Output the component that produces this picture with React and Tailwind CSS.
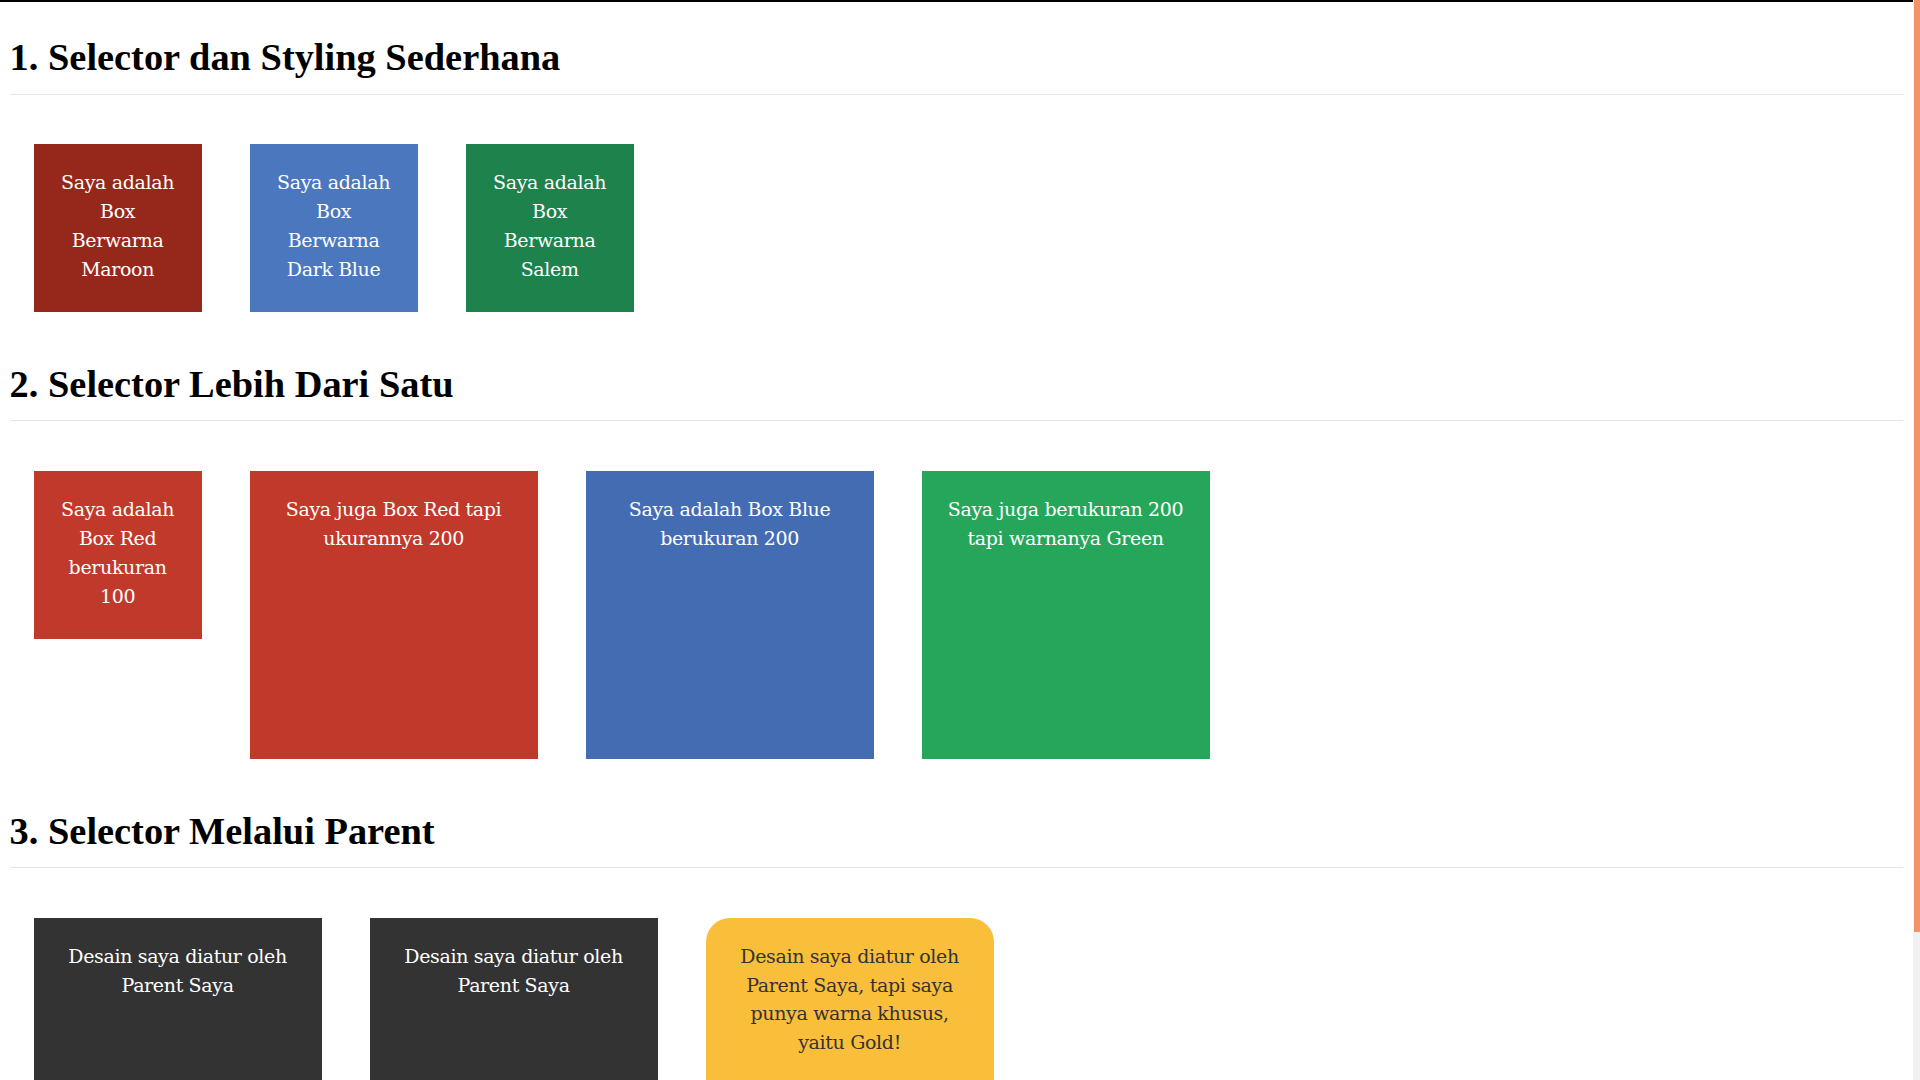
import React from "react";

const boxText =
  "p-[24px] text-center text-[19px] leading-[28.8px] tracking-[-0.35px] font-['DejaVu_Serif',serif] shrink-0";

function Heading({ children }) {
  return (
    <h1 className="mt-[25.7px] pb-[14.4px] border-b border-[#e6e6e6] text-[38.4px] leading-[44px] font-bold text-black font-['Liberation_Serif',serif]">
      {children}
    </h1>
  );
}

function Row({ children }) {
  return <div className="mt-[25.7px] p-[24px] flex items-start gap-[48px]">{children}</div>;
}

export default function App() {
  return (
    <div className="flex h-[1080px] w-[1920px] overflow-hidden bg-white">
      <div className="flex-1 min-w-0 border-t-2 border-black px-[9.6px] pt-[7.6px]">
        <Heading>1. Selector dan Styling Sederhana</Heading>
        <Row>
          <div className={`w-[168px] h-[168px] bg-[#96281b] text-white ${boxText}`}>
            Saya adalah Box Berwarna Maroon
          </div>
          <div className={`w-[168px] h-[168px] bg-[#4b77be] text-white ${boxText}`}>
            Saya adalah Box Berwarna Dark Blue
          </div>
          <div className={`w-[168px] h-[168px] bg-[#1e824c] text-white ${boxText}`}>
            Saya adalah Box Berwarna Salem
          </div>
        </Row>

        <Heading>2. Selector Lebih Dari Satu</Heading>
        <Row>
          <div className={`w-[168px] h-[168px] bg-[#c0392b] text-white ${boxText}`}>
            Saya adalah Box Red berukuran 100
          </div>
          <div className={`w-[288px] h-[288px] bg-[#c0392b] text-white ${boxText}`}>
            Saya juga Box Red tapi ukurannya 200
          </div>
          <div className={`w-[288px] h-[288px] bg-[#446cb3] text-white ${boxText}`}>
            Saya adalah Box Blue berukuran 200
          </div>
          <div className={`w-[288px] h-[288px] bg-[#26a65b] text-white ${boxText}`}>
            Saya juga berukuran 200 tapi warnanya Green
          </div>
        </Row>

        <Heading>3. Selector Melalui Parent</Heading>
        <Row>
          <div className={`w-[288px] h-[288px] bg-[#333333] text-white ${boxText}`}>
            Desain saya diatur oleh Parent Saya
          </div>
          <div className={`w-[288px] h-[288px] bg-[#333333] text-white ${boxText}`}>
            Desain saya diatur oleh Parent Saya
          </div>
          <div className={`w-[288px] h-[288px] rounded-[24px] bg-[#f9bf3b] text-[#333333] ${boxText}`}>
            Desain saya diatur oleh Parent Saya, tapi saya punya warna khusus, yaitu Gold!
          </div>
        </Row>
      </div>
      <div className="w-[7px] shrink-0 bg-[#f1f1f1] flex">
        <div className="ml-[1px] w-[6px] h-[932px] bg-[#f5926a]" />
      </div>
    </div>
  );
}
